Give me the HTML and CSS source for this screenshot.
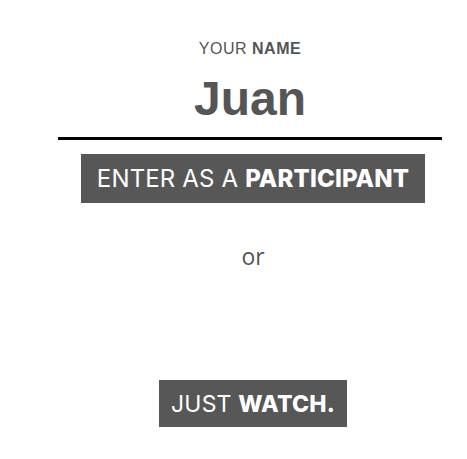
FILE: index.html
```html
<!DOCTYPE html>
<html>
<head>
<meta charset="utf-8">
<link rel="stylesheet" href="styles.css">
</head>
<body>
<main class="page">
  <label class="label">YOUR <b>NAME</b></label>
  <div class="name">Juan</div>
  <div class="rule"></div>
  <button class="btn btn-main">ENTER AS A <b>PARTICIPANT</b></button>
  <div class="or">or</div>
  <button class="btn btn-watch">JUST <b>WATCH.</b></button>
</main>
</body>
</html>
```
FILE: styles.css
```css
html, body { margin: 0; padding: 0; background: #fff; }
.page {
  box-sizing: border-box;
  width: 467px;
  padding-left: 33px;
  display: flex;
  flex-direction: column;
  align-items: center;
  padding-top: 40px;
  font-family: "Open Sans", sans-serif;
  color: #555;
}
.label {
  font-family: "Liberation Sans", Arial, sans-serif;
  font-size: 16px;
  line-height: 18px;
  letter-spacing: 0.5px;
  color: #555;
}
.label b { font-weight: 700; }
.name {
  margin-top: 14px;
  font-family: "Liberation Sans", Arial, sans-serif;
  font-weight: 700;
  font-size: 48px;
  line-height: 54px;
  color: #555;
}
.rule {
  margin-top: 11px;
  width: 384px;
  height: 3px;
  background: #000;
}
.btn {
  border: none;
  background: #575757;
  color: #fff;
  font-family: Inter, "Open Sans", sans-serif;
  font-weight: 400;
  cursor: pointer;
  padding: 0;
  margin-left: 6px;
}
.btn b { font-weight: 800; }
.btn-main {
  margin-top: 14px;
  width: 344px;
  height: 49px;
  font-size: 24px;
  letter-spacing: 0.15px;
}
.or {
  margin-top: 38px;
  margin-left: 6px;
  font-size: 23px;
  line-height: 30px;
  color: #555;
}
.btn-watch {
  margin-top: 109px;
  width: 188px;
  height: 47px;
  font-size: 23px;
  letter-spacing: 0.2px;
}
```
